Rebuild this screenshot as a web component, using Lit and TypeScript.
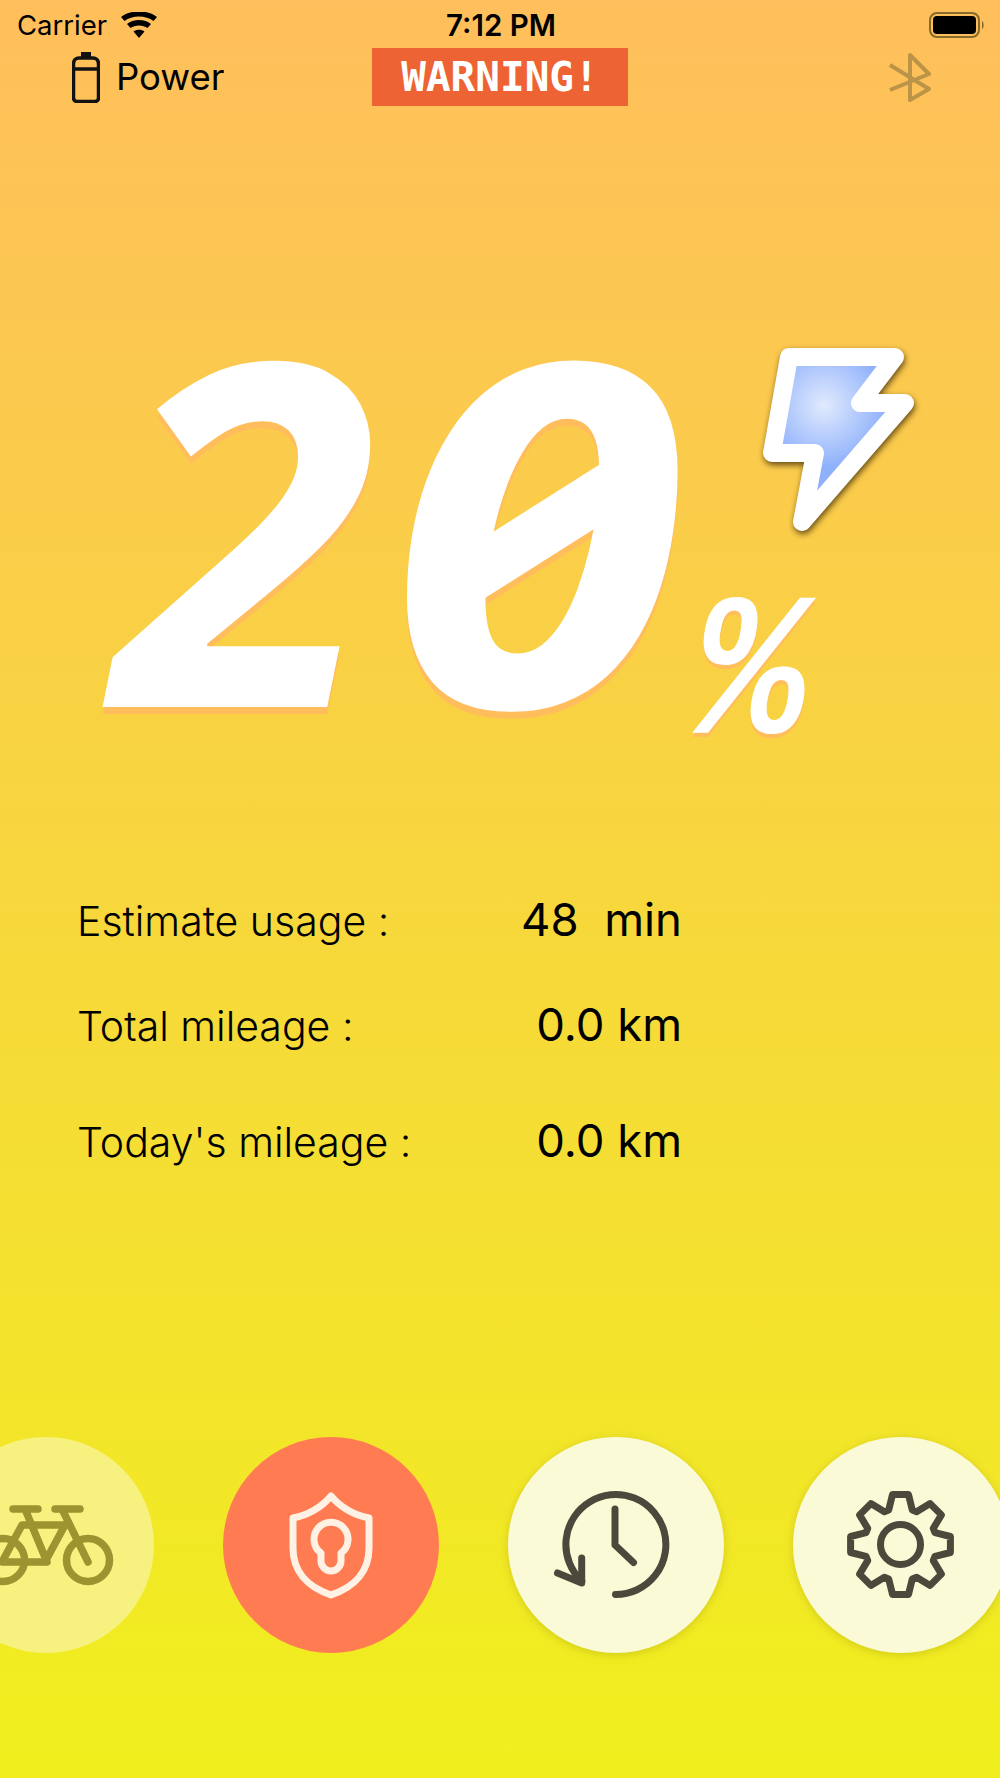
import {LitElement, html, css, svg} from 'lit';
import {customElement} from 'lit/decorators.js';

// gear outline, 8 teeth, in the 215 box of a nav circle
function gearPath() {
  const c = 107.5;
  const pt = (r: number, a: number) => `${(c + r * Math.sin(a)).toFixed(1)} ${(c - r * Math.cos(a)).toFixed(1)}`;
  let d = '';
  for (let i = 0; i < 8; i++) {
    const a = (i * Math.PI) / 4;
    d += `${i ? 'L' : 'M'}${pt(36.5, a - 0.33)} L${pt(50.5, a - 0.16)} L${pt(50.5, a + 0.16)} L${pt(36.5, a + 0.33)} `;
  }
  return d + 'Z';
}

const bike = svg`
  <g fill="none" stroke="#9c9431" stroke-width="7.500" stroke-linecap="round" stroke-linejoin="round">
    <circle cx="150" cy="123" r="21.5"/><circle cx="65" cy="123" r="21.5"/>
    <path d="M75 72H100M117 72H142M87 72L109 125M124 72L150 125M84 88H127L107 125H64Z"/>
  </g>`;

const shield = svg`
  <g fill="none" stroke="#fff1e3" stroke-width="7" stroke-linecap="round" stroke-linejoin="round">
    <path d="M108 59C97 72 85 78 70 81V111C70 134 84 150 108 158C132 150 146 134 146 111V81C131 78 119 72 108 59Z"/>
    <path d="M98 116A17 17 0 1 1 118 116V124A10 10 0 0 1 98 124Z"/>
  </g>`;

const clock = svg`
  <g fill="none" stroke="#4a493b" stroke-width="7" stroke-linecap="round" stroke-linejoin="round">
    <path d="M107.500 157.500A50 50 0 1 0 73.700 144"/>
    <path d="M73.700 121V146L49.500 136M107 72V108L125.500 125.500"/>
  </g>`;

const gear = svg`
  <g fill="none" stroke="#4a493b" stroke-width="7" stroke-linecap="round" stroke-linejoin="round">
    <path d=${gearPath()}/>
    <circle cx="107.500" cy="107.500" r="20"/>
  </g>`;

@customElement('app-root')
export class AppRoot extends LitElement {
  static styles = css`
    * {
      margin: 0;
      padding: 0;
      box-sizing: border-box;
    }
    :host {
      display: block;
      width: 1000px;
      height: 1778px;
      overflow: hidden;
      font-family: Inter, 'Liberation Sans', sans-serif;
      color: #000;
      background: linear-gradient(180deg, #ffbf5c 0%, #f0ef1d 100%);
    }
    .page {
      position: relative;
      display: flex;
      flex-direction: column;
      height: 100%;
    }
    .status {
      display: grid;
      grid-template-columns: 1fr auto 1fr;
      align-items: center;
      height: 48px;
      padding: 2px 15px 0 17px;
      font-size: 27.500px;
    }
    .status .left {
      display: flex;
      align-items: center;
      gap: 14px;
    }
    .status .time {
      font-weight: 600;
      font-size: 29.500px;
    }
    .status .right {
      display: flex;
      justify-content: flex-end;
    }
    .header {
      display: flex;
      align-items: center;
      height: 58px;
      padding: 0 68px 0 72px;
    }
    .power {
      display: flex;
      align-items: center;
      gap: 16px;
      width: 300px;
      font-size: 36.500px;
    }
    .warning {
      width: 256px;
      height: 58px;
      display: flex;
      align-items: center;
      justify-content: center;
      background: #ee6333;
      color: #fff;
      font: bold 41px 'DejaVu Sans Mono', monospace;
    }
    .bt {
      margin-left: auto;
    }
    .hero {
      position: relative;
      z-index: 1;
      display: flex;
      align-items: baseline;
      margin-top: 181px;
      padding-left: 114px;
      height: 470px;
      line-height: 470px;
      color: #fff;
    }
    .digit {
      font: italic bold 478px/470px 'Noto Sans', sans-serif;
      text-shadow: 0 7px 0 #ffbd5c;
    }
    .digit.two {
      width: 276px;
    }
    /* the zero is wider than the two in the reference */
    .digit.zero {
      width: 300px;
      transform: scaleX(1.11);
      transform-origin: 0 50%;
    }
    .pct {
      font: italic bold 205px/470px 'Liberation Mono', monospace;
      transform: translateY(26px) scaleX(0.9);
      text-shadow: 0 4px 0 #ffbd5c;
    }
    .slash {
      position: absolute;
      left: 433px;
      top: 436px;
    }
    .slash.under {
      z-index: 0;
    }
    .slash.over {
      z-index: 2;
    }
    .bolt {
      position: absolute;
      left: 720px;
      top: 330px;
      filter: drop-shadow(1px 3px 3px rgba(50, 30, 0, 0.75));
    }
    .stats {
      display: grid;
      grid-template-columns: 401px 204px;
      margin: 135px 0 0 77px;
      align-items: baseline;
    }
    .label {
      font-size: 41px;
      font-weight: 300;
    }
    .value {
      font-size: 45.500px;
      text-align: right;
      white-space: pre;
    }
    .row1 {
      height: 101px;
    }
    .row2 {
      height: 112px;
    }
    .nav {
      display: flex;
      gap: 69px;
      margin: auto 0 125px -62px;
    }
    .btn {
      flex: none;
      width: 216px;
      height: 216px;
      border-radius: 50%;
      background: #fbfad6;
      box-shadow: 0 2px 8px rgba(120, 110, 0, 0.25);
    }
    .btn.ride {
      background: #f7f180;
      box-shadow: none;
    }
    .btn.lock {
      background: #ff7c52;
      box-shadow: none;
    }
    .btn svg {
      display: block;
    }
  `;

  render() {
    // bar across the zero, page coordinates minus the .slash offset
    const bar = 'M22 120L180 20V81L22 181Z';
    return html`
      <div class="page">
        <div class="status">
          <div class="left">
            <span>Carrier</span>
            <svg width="36" height="26" viewBox="0 0 36 26">
              <path d="M18 26L12.500 19.500C15.500 17 20.500 17 23.500 19.500ZM9.500 16L6 12C12 6.800 24 6.800 30 12L26.500 16C22 12.500 14 12.500 9.500 16ZM3.500 9L0 5C9.500 -2.500 26.500 -2.500 36 5L32.500 9C25 3 11 3 3.500 9Z" fill="#000"/>
            </svg>
          </div>
          <span class="time">7:12 PM</span>
          <div class="right">
            <svg width="56" height="26" viewBox="0 0 56 26">
              <rect x="1" y="1" width="49" height="24" rx="7" fill="none" stroke="#8a6a2c" stroke-width="2"/>
              <rect x="4" y="4" width="43" height="18" rx="4" fill="#000"/>
              <path d="M53 9C55 10 55.500 16 53 17Z" fill="#8a6a2c"/>
            </svg>
          </div>
        </div>
        <div class="header">
          <div class="power">
            <svg width="28" height="52" viewBox="0 0 28 52">
              <path d="M9 1H19V7H9Z" fill="#111"/>
              <path d="M7 7H21C24 7 26.500 9 26.500 13V47C26.500 49 25 50.500 23 50.500H5C3 50.500 1.500 49 1.500 47V13C1.500 9 4 7 7 7ZM1.500 18H26.500" fill="none" stroke="#111" stroke-width="3.500"/>
            </svg>
            <span>Power</span>
          </div>
          <div class="warning">WARNING!</div>
          <svg class="bt" width="44" height="50" viewBox="0 0 44 50">
            <path d="M2 13L41 37L22 48V3L41 22L2 38" fill="none" stroke="#bc9448" stroke-width="4" stroke-linejoin="round"/>
          </svg>
        </div>
        <svg class="slash under" width="200" height="200" viewBox="0 0 200 200"><path d=${bar} transform="translate(0 7)" fill="#ffbd5c"/></svg>
        <div class="hero">
          <span class="digit two">2</span><span class="digit zero">0</span><span class="pct">%</span>
        </div>
        <svg class="slash over" width="200" height="200" viewBox="0 0 200 200"><path d=${bar} fill="#fff"/></svg>
        <svg class="bolt" width="210" height="220" viewBox="0 0 210 220">
          <defs>
            <radialGradient id="boltFill" gradientUnits="userSpaceOnUse" cx="104" cy="75" r="62">
              <stop offset="0" stop-color="#e1eafd"/>
              <stop offset="1" stop-color="#8fb1fc"/>
            </radialGradient>
          </defs>
          <path d="M69 27H175L140 73H185L82 192L95 123H52Z" fill="url(#boltFill)" stroke="#fff" stroke-width="18" stroke-linejoin="round"/>
        </svg>
        <div class="stats">
          <div class="label row1">Estimate usage :</div><div class="value row1">48  min</div>
          <div class="label row2">Total mileage :</div><div class="value row2">0.0 km</div>
          <div class="label">Today's mileage :</div><div class="value">0.0 km</div>
        </div>
        <div class="nav">
          <div class="btn ride"><svg width="215" height="215" viewBox="0 0 215 215">${bike}</svg></div>
          <div class="btn lock"><svg width="215" height="215" viewBox="0 0 215 215">${shield}</svg></div>
          <div class="btn"><svg width="215" height="215" viewBox="0 0 215 215">${clock}</svg></div>
          <div class="btn"><svg width="215" height="215" viewBox="0 0 215 215">${gear}</svg></div>
        </div>
      </div>
    `;
  }
}
